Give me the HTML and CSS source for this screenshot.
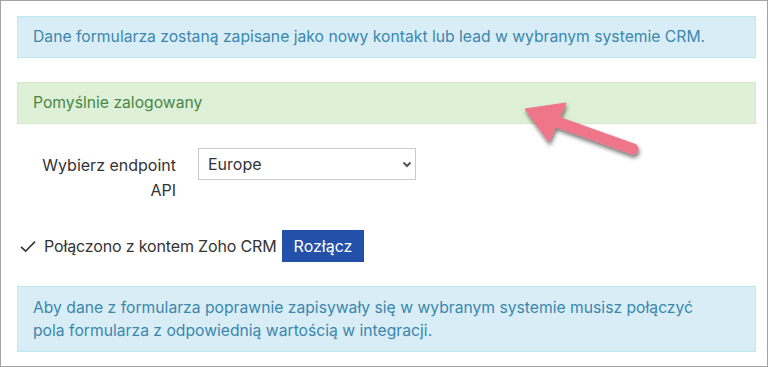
FILE: index.html
```
<!DOCTYPE html>
<html lang="pl">
<head>
    <meta charset="UTF-8">
    <meta name="viewport" content="width=device-width, initial-scale=1.0">
    <title>Integracja CRM</title>
    <link rel="stylesheet" href="styles.css">
</head>
<body>
    <div class="frame">
        <div class="alert alert-info">Dane formularza zostaną zapisane jako nowy kontakt lub lead w wybranym systemie CRM.</div>
        <div class="alert alert-success">Pomyślnie zalogowany</div>

        <div class="form-row">
            <label class="form-label" for="endpoint">Wybierz endpoint API</label>
            <div class="select-wrap">
                <select id="endpoint" class="form-select">
                    <option>Europe</option>
                    <option>United States</option>
                    <option>India</option>
                    <option>China</option>
                    <option>Australia</option>
                </select>
                <svg class="chevron" width="10" height="7" viewBox="0 0 10 7"><path d="M1.5 1.5 L5 5 L8.5 1.5" fill="none" stroke="#555" stroke-width="2"/></svg>
            </div>
        </div>

        <div class="status-row">
            <svg class="check" width="16" height="13" viewBox="0 0 16 13"><path d="M1 6.8 L5.6 11.2 L15 1.6" fill="none" stroke="#333" stroke-width="1.6"/></svg>
            <span class="status-text">Połączono z kontem Zoho CRM</span>
            <button class="btn-primary" type="button">Rozłącz</button>
        </div>

        <div class="alert alert-info alert-multi">Aby dane z formularza poprawnie zapisywały się w wybranym systemie musisz połączyć<br>pola formularza z odpowiednią wartością w integracji.</div>

        <!-- strzałka z adnotacji zrzutu -->
        <svg class="annotation" width="160" height="80" viewBox="0 0 160 80">
            <defs>
                <filter id="shadow" x="-20%" y="-20%" width="140%" height="150%">
                    <feDropShadow dx="1" dy="3" stdDeviation="2" flood-color="#000" flood-opacity="0.55"/>
                </filter>
            </defs>
            <g filter="url(#shadow)" fill="#ef7489" stroke="#ef7489">
                <line x1="124" y1="58" x2="40" y2="28" stroke-width="11" stroke-linecap="round"/>
                <polygon points="16,18 57,12 40,51" stroke-width="1" stroke-linejoin="round"/>
            </g>
        </svg>
    </div>
</body>
</html>
```
FILE: styles.css
```
body {
    margin: 0;
    padding: 0;
    background: #fff;
    font-family: Inter, "Noto Sans", Arial, sans-serif;
    color: #333;
}
.frame {
    position: relative;
    box-sizing: border-box;
    width: 768px;
    height: 367px;
    border: 1px solid #a3a3a3;
    padding: 15px 11px 0 16px;
    overflow: hidden;
}
.alert {
    border: 1px solid transparent;
    padding: 9px 15px;
    font-size: 15.7px;
    line-height: 22px;
    margin-bottom: 24px;
}
.alert-info {
    background: #d9edf7;
    border-color: #bce8f1;
    color: #3a87ad;
}
.alert-success {
    background: #dff0d8;
    border-color: #d6e9c6;
    color: #468847;
}
.alert-multi {
    line-height: 23px;
}
.form-row {
    display: flex;
    align-items: flex-start;
    gap: 22px;
}
.form-label {
    width: 142px;
    padding-left: 17px;
    padding-top: 5px;
    text-align: right;
    font-size: 16px;
    line-height: 25px;
}
.select-wrap {
    position: relative;
    width: 218px;
}
.form-select {
    display: block;
    width: 100%;
    height: 32px;
    padding: 0 28px 0 9px;
    border: 1px solid #ccc;
    border-radius: 0;
    background: #fff;
    font-family: inherit;
    font-size: 16px;
    color: #333;
    -webkit-appearance: none;
    appearance: none;
}
.chevron {
    position: absolute;
    right: 4px;
    top: 13px;
    pointer-events: none;
}
.status-row {
    display: flex;
    align-items: center;
    margin-top: 27px;
    margin-bottom: 24px;
    font-size: 16px;
}
.check {
    margin-left: 3px;
    margin-right: 8px;
}
.status-text {
    margin-right: 5px;
    letter-spacing: -0.15px;
}
.btn-primary {
    height: 32px;
    padding: 0 12px;
    border: 0;
    background: #2350a9;
    color: #fff;
    font-family: inherit;
    font-size: 16px;
}
.annotation {
    position: absolute;
    left: 508px;
    top: 90px;
}
```
